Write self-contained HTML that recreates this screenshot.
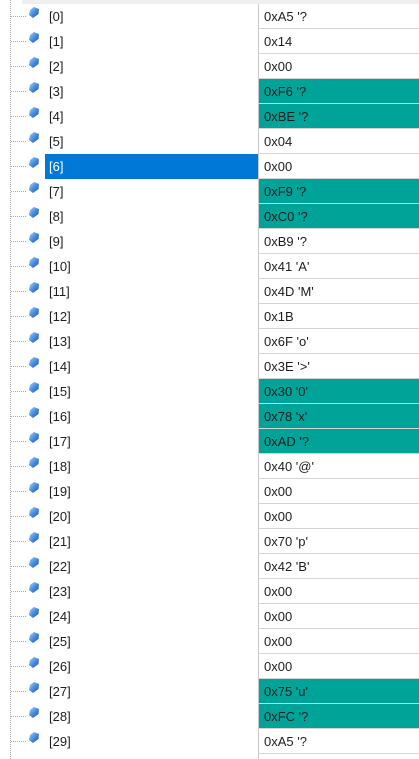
<!DOCTYPE html><html><head><style>
html,body{margin:0;width:419px;height:759px;overflow:hidden}
body{background:#fff;position:relative;font-family:"Liberation Sans",sans-serif;font-size:13px;color:#1e1e1e}
.top{position:absolute;left:22px;top:0;width:397px;height:4px;background:#efefef}
.vl{position:absolute;left:10px;top:0;height:759px;border-left:1px dotted #aaa}
.r{position:absolute;left:0;width:419px;height:25px}
.h{position:absolute;left:11px;top:12px;width:15px;border-top:1px dotted #aaa}
.ic{position:absolute;left:29px;top:3px;width:10px;height:11px}
.n{position:absolute;left:49px;top:5px}
.s{position:absolute;left:45px;top:0;width:213px;height:25px;background:#0078d7}
.s+.n{color:#fff}
.v{position:absolute;left:258px;top:0;width:161px;height:24px;border-left:1px solid #c8c8c8;border-bottom:1px solid #d4d4d4}
.v span{position:absolute;left:5px;top:5px}
.t{background:#00a398}
</style></head><body>
<svg width="0" height="0" style="position:absolute"><defs><linearGradient id="g" x1="0" y1="0" x2="1" y2="1"><stop offset="0" stop-color="#a8d4ff"/><stop offset="0.5" stop-color="#4a8ee0"/><stop offset="1" stop-color="#1a4fa8"/></linearGradient><symbol id="d" viewBox="0 0 10 11"><polygon points="5,0 10,2 9.5,7 4,11 0,8 1,3" fill="url(#g)"/></symbol></defs></svg>
<div class="top"></div><div class="vl"></div>
<div class="r" style="top:4px"><div class="h"></div><svg class="ic"><use href="#d"/></svg><div class="n">[0]</div><div class="v"><span>0xA5 '?</span></div></div>
<div class="r" style="top:29px"><div class="h"></div><svg class="ic"><use href="#d"/></svg><div class="n">[1]</div><div class="v"><span>0x14</span></div></div>
<div class="r" style="top:54px"><div class="h"></div><svg class="ic"><use href="#d"/></svg><div class="n">[2]</div><div class="v"><span>0x00</span></div></div>
<div class="r" style="top:79px"><div class="h"></div><svg class="ic"><use href="#d"/></svg><div class="n">[3]</div><div class="v t"><span>0xF6 '?</span></div></div>
<div class="r" style="top:104px"><div class="h"></div><svg class="ic"><use href="#d"/></svg><div class="n">[4]</div><div class="v t"><span>0xBE '?</span></div></div>
<div class="r" style="top:129px"><div class="h"></div><svg class="ic"><use href="#d"/></svg><div class="n">[5]</div><div class="v"><span>0x04</span></div></div>
<div class="r" style="top:154px"><div class="h"></div><div class="s"></div><div class="n">[6]</div><svg class="ic"><use href="#d"/></svg><div class="v"><span>0x00</span></div></div>
<div class="r" style="top:179px"><div class="h"></div><svg class="ic"><use href="#d"/></svg><div class="n">[7]</div><div class="v t"><span>0xF9 '?</span></div></div>
<div class="r" style="top:204px"><div class="h"></div><svg class="ic"><use href="#d"/></svg><div class="n">[8]</div><div class="v t"><span>0xC0 '?</span></div></div>
<div class="r" style="top:229px"><div class="h"></div><svg class="ic"><use href="#d"/></svg><div class="n">[9]</div><div class="v"><span>0xB9 '?</span></div></div>
<div class="r" style="top:254px"><div class="h"></div><svg class="ic"><use href="#d"/></svg><div class="n">[10]</div><div class="v"><span>0x41 'A'</span></div></div>
<div class="r" style="top:279px"><div class="h"></div><svg class="ic"><use href="#d"/></svg><div class="n">[11]</div><div class="v"><span>0x4D 'M'</span></div></div>
<div class="r" style="top:304px"><div class="h"></div><svg class="ic"><use href="#d"/></svg><div class="n">[12]</div><div class="v"><span>0x1B</span></div></div>
<div class="r" style="top:329px"><div class="h"></div><svg class="ic"><use href="#d"/></svg><div class="n">[13]</div><div class="v"><span>0x6F 'o'</span></div></div>
<div class="r" style="top:354px"><div class="h"></div><svg class="ic"><use href="#d"/></svg><div class="n">[14]</div><div class="v"><span>0x3E '&gt;'</span></div></div>
<div class="r" style="top:379px"><div class="h"></div><svg class="ic"><use href="#d"/></svg><div class="n">[15]</div><div class="v t"><span>0x30 '0'</span></div></div>
<div class="r" style="top:404px"><div class="h"></div><svg class="ic"><use href="#d"/></svg><div class="n">[16]</div><div class="v t"><span>0x78 'x'</span></div></div>
<div class="r" style="top:429px"><div class="h"></div><svg class="ic"><use href="#d"/></svg><div class="n">[17]</div><div class="v t"><span>0xAD '?</span></div></div>
<div class="r" style="top:454px"><div class="h"></div><svg class="ic"><use href="#d"/></svg><div class="n">[18]</div><div class="v"><span>0x40 '@'</span></div></div>
<div class="r" style="top:479px"><div class="h"></div><svg class="ic"><use href="#d"/></svg><div class="n">[19]</div><div class="v"><span>0x00</span></div></div>
<div class="r" style="top:504px"><div class="h"></div><svg class="ic"><use href="#d"/></svg><div class="n">[20]</div><div class="v"><span>0x00</span></div></div>
<div class="r" style="top:529px"><div class="h"></div><svg class="ic"><use href="#d"/></svg><div class="n">[21]</div><div class="v"><span>0x70 'p'</span></div></div>
<div class="r" style="top:554px"><div class="h"></div><svg class="ic"><use href="#d"/></svg><div class="n">[22]</div><div class="v"><span>0x42 'B'</span></div></div>
<div class="r" style="top:579px"><div class="h"></div><svg class="ic"><use href="#d"/></svg><div class="n">[23]</div><div class="v"><span>0x00</span></div></div>
<div class="r" style="top:604px"><div class="h"></div><svg class="ic"><use href="#d"/></svg><div class="n">[24]</div><div class="v"><span>0x00</span></div></div>
<div class="r" style="top:629px"><div class="h"></div><svg class="ic"><use href="#d"/></svg><div class="n">[25]</div><div class="v"><span>0x00</span></div></div>
<div class="r" style="top:654px"><div class="h"></div><svg class="ic"><use href="#d"/></svg><div class="n">[26]</div><div class="v"><span>0x00</span></div></div>
<div class="r" style="top:679px"><div class="h"></div><svg class="ic"><use href="#d"/></svg><div class="n">[27]</div><div class="v t"><span>0x75 'u'</span></div></div>
<div class="r" style="top:704px"><div class="h"></div><svg class="ic"><use href="#d"/></svg><div class="n">[28]</div><div class="v t"><span>0xFC '?</span></div></div>
<div class="r" style="top:729px"><div class="h"></div><svg class="ic"><use href="#d"/></svg><div class="n">[29]</div><div class="v"><span>0xA5 '?</span></div></div>
<div style="position:absolute;left:258px;top:754px;width:161px;height:5px;border-left:1px solid #c8c8c8"></div>
</body></html>
